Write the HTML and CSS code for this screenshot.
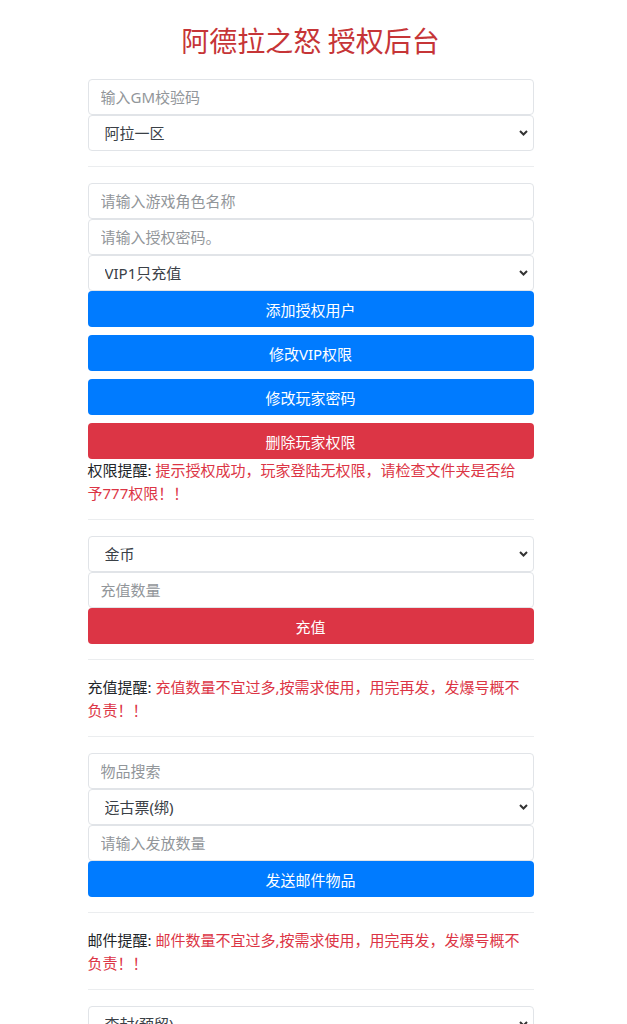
FILE: index.html
```html
<!DOCTYPE html>
<html lang="zh-CN">
<head>
<meta charset="utf-8">
<title>阿德拉之怒 授权后台</title>
<link rel="stylesheet" href="styles.css">
</head>
<body>
<div class="page">
  <h1 class="title">阿德拉之怒 授权后台</h1>

  <div class="group">
    <input class="field" type="text" placeholder="输入GM校验码">
    <select class="field select"><option>阿拉一区</option></select>
  </div>

  <hr class="rule">

  <div class="group">
    <input class="field" type="text" placeholder="请输入游戏角色名称">
    <input class="field" type="text" placeholder="请输入授权密码。">
    <select class="field select"><option>VIP1只充值</option></select>
    <button class="btn btn-primary">添加授权用户</button>
    <button class="btn btn-primary">修改VIP权限</button>
    <button class="btn btn-primary">修改玩家密码</button>
    <button class="btn btn-danger">删除玩家权限</button>
    <p class="note">权限提醒: <span class="warn">提示授权成功，玩家登陆无权限，请检查文件夹是否给予777权限！！</span></p>
  </div>

  <hr class="rule">

  <div class="group">
    <select class="field select"><option>金币</option></select>
    <input class="field" type="text" placeholder="充值数量">
    <button class="btn btn-danger">充值</button>
  </div>

  <hr class="rule">
  <p class="note">充值提醒: <span class="warn">充值数量不宜过多,按需求使用，用完再发，发爆号概不负责！！</span></p>
  <hr class="rule">

  <div class="group">
    <input class="field" type="text" placeholder="物品搜索">
    <select class="field select"><option>远古票(绑)</option></select>
    <input class="field" type="text" placeholder="请输入发放数量">
    <button class="btn btn-primary">发送邮件物品</button>
  </div>

  <hr class="rule">
  <p class="note">邮件提醒: <span class="warn">邮件数量不宜过多,按需求使用，用完再发，发爆号概不负责！！</span></p>
  <hr class="rule">

  <div class="group">
    <select class="field select"><option>查封(预留)</option></select>
    <input class="field" type="text" placeholder="请输入封禁天数">
    <button class="btn btn-danger">封禁玩家</button>
  </div>
</div>
</body>
</html>
```

FILE: styles.css
```css
html, body {
  background: #ffffff;
}

body {
  margin: 0;
  padding: 0 6px 40px 0;
  font-family: "Noto Sans", "Noto Sans CJK SC", sans-serif;
  color: #212529;
}

.page {
  width: 446px;
  margin: 0 auto;
}

.title {
  margin: 23px 0 22px;
  font-family: "Noto Sans CJK SC", sans-serif;
  font-size: 28px;
  line-height: 34px;
  font-weight: 400;
  text-align: center;
  color: #c63537;
}

.group {
  display: flex;
  flex-direction: column;
}

.field {
  display: block;
  width: 100%;
  box-sizing: border-box;
  height: 36px;
  margin: 0;
  padding: 0 12px;
  font-family: inherit;
  font-size: 15px;
  color: #495057;
  background-color: #ffffff;
  border: 1px solid #e1e4e8;
  border-radius: 4px;
  outline: none;
}

.field::placeholder {
  color: #92969a;
}

.select {
  appearance: none;
  -webkit-appearance: none;
  padding-left: 16px;
  padding-right: 28px;
  color: #3a4046;
  background-image: url("data:image/svg+xml,%3Csvg xmlns='http://www.w3.org/2000/svg' width='9' height='6' viewBox='0 0 9 6'%3E%3Cpath d='M1 1l3.5 3.5L8 1' fill='none' stroke='%23333' stroke-width='2'/%3E%3C/svg%3E");
  background-repeat: no-repeat;
  background-position: right 5px center;
  background-size: 9px 6px;
}

.btn {
  display: block;
  width: 100%;
  height: 36px;
  margin: 0;
  padding: 0;
  border: 0;
  border-radius: 4px;
  font-family: inherit;
  font-size: 15px;
  color: #ffffff;
  cursor: pointer;
}

.btn + .btn {
  margin-top: 8px;
}

.btn-primary {
  background: #007bff;
}

.btn-danger {
  background: #dc3545;
}

.rule {
  margin: 15px 0 16px;
  border: 0;
  border-top: 1px solid #ebedef;
  height: 0;
}

.note {
  margin: 0;
  padding-right: 6px;
  font-size: 15px;
  line-height: 22.5px;
  color: #212529;
}

.warn {
  color: #dc3545;
}
```
